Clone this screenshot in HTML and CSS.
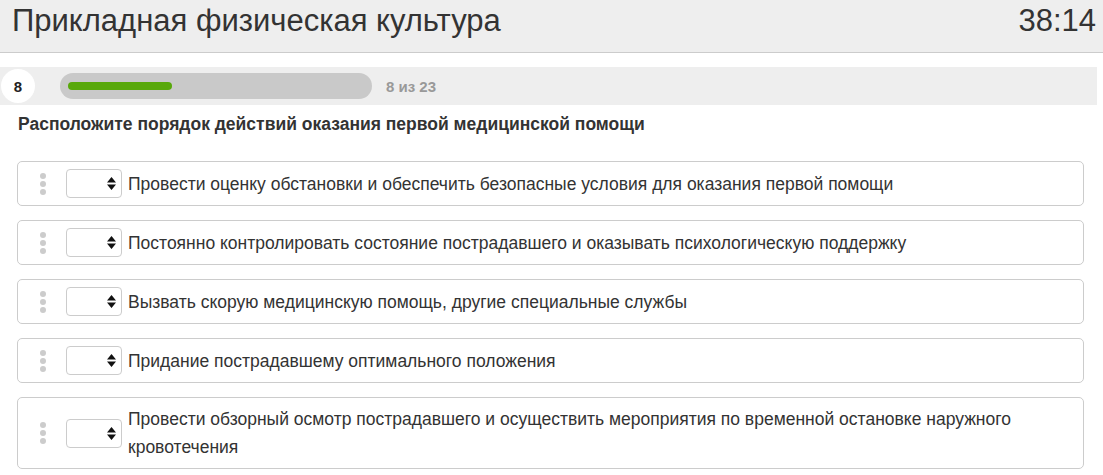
FILE: index.html
```html
<!DOCTYPE html>
<html lang="ru">
<head>
<meta charset="utf-8">
<title>Прикладная физическая культура</title>
<link rel="stylesheet" href="styles.css">
</head>
<body>
<header class="top">
  <h1 class="title">Прикладная физическая культура</h1>
  <div class="timer">38:14</div>
</header>
<div class="progress-row">
  <div class="num">8</div>
  <div class="track"><div class="fill"></div></div>
  <div class="count">8 из 23</div>
</div>
<p class="question">Расположите порядок действий оказания первой медицинской помощи</p>
<ul class="items">
  <li class="item">
    <span class="grip"><i></i><i></i><i></i></span>
    <span class="sel"><svg width="9" height="13" viewBox="0 0 9 13"><path d="M4.5 0 L9 5.5 H0 Z M4.5 13 L9 7.5 H0 Z" fill="#111"/></svg></span>
    <span class="text">Провести оценку обстановки и обеспечить безопасные условия для оказания первой помощи</span>
  </li>
  <li class="item">
    <span class="grip"><i></i><i></i><i></i></span>
    <span class="sel"><svg width="9" height="13" viewBox="0 0 9 13"><path d="M4.5 0 L9 5.5 H0 Z M4.5 13 L9 7.5 H0 Z" fill="#111"/></svg></span>
    <span class="text">Постоянно контролировать состояние пострадавшего и оказывать психологическую поддержку</span>
  </li>
  <li class="item">
    <span class="grip"><i></i><i></i><i></i></span>
    <span class="sel"><svg width="9" height="13" viewBox="0 0 9 13"><path d="M4.5 0 L9 5.5 H0 Z M4.5 13 L9 7.5 H0 Z" fill="#111"/></svg></span>
    <span class="text">Вызвать скорую медицинскую помощь, другие специальные службы</span>
  </li>
  <li class="item">
    <span class="grip"><i></i><i></i><i></i></span>
    <span class="sel"><svg width="9" height="13" viewBox="0 0 9 13"><path d="M4.5 0 L9 5.5 H0 Z M4.5 13 L9 7.5 H0 Z" fill="#111"/></svg></span>
    <span class="text">Придание пострадавшему оптимального положения</span>
  </li>
  <li class="item">
    <span class="grip"><i></i><i></i><i></i></span>
    <span class="sel"><svg width="9" height="13" viewBox="0 0 9 13"><path d="M4.5 0 L9 5.5 H0 Z M4.5 13 L9 7.5 H0 Z" fill="#111"/></svg></span>
    <span class="text">Провести обзорный осмотр пострадавшего и осуществить мероприятия по временной остановке наружного кровотечения</span>
  </li>
</ul>
</body>
</html>
```
FILE: styles.css
```css
html, body {
  margin: 0;
  padding: 0;
  background: #fff;
  font-family: "Liberation Sans", Arial, sans-serif;
  color: #333;
}
.top {
  display: flex;
  justify-content: space-between;
  align-items: flex-start;
  height: 53px;
  box-sizing: border-box;
  padding: 3px 7px 0 12px;
  background: #eee;
  border-bottom: 1px solid #ccc;
}
.title {
  margin: 0;
  font-size: 31px;
  font-weight: normal;
  line-height: 36px;
  color: #333;
}
.timer {
  font-size: 31px;
  line-height: 36px;
  color: #333;
}
.progress-row {
  display: flex;
  align-items: center;
  width: 1097px;
  height: 38px;
  margin-top: 14px;
  background: #eee;
}
.num {
  width: 34px;
  height: 34px;
  margin-left: 1px;
  border-radius: 50%;
  background: #fff;
  display: flex;
  align-items: center;
  justify-content: center;
  font-weight: bold;
  font-size: 15px;
  color: #222;
}
.track {
  display: flex;
  align-items: center;
  width: 312px;
  height: 26px;
  margin-left: 25px;
  border-radius: 13px;
  background: #c9c9c9;
}
.fill {
  width: 104px;
  height: 8px;
  margin-left: 8px;
  border-radius: 4px;
  background: #58a80a;
}
.count {
  margin-left: 14px;
  font-size: 15px;
  font-weight: bold;
  color: #999;
}
.question {
  margin: 8px 0 0 18px;
  font-size: 17.5px;
  font-weight: bold;
  line-height: 22px;
  color: #333;
}
.items {
  list-style: none;
  margin: 26px 19px 0 17px;
  padding: 0;
  display: flex;
  flex-direction: column;
  gap: 14px;
}
.item {
  display: flex;
  align-items: center;
  border: 1px solid #ccc;
  border-radius: 5px;
  padding: 7px 8px 7px 0;
}
.grip {
  display: flex;
  flex-direction: column;
  gap: 2px;
  margin-left: 22px;
  flex: none;
}
.grip i {
  display: block;
  width: 6px;
  height: 6px;
  border-radius: 50%;
  background: #ccc;
}
.sel {
  flex: none;
  display: flex;
  align-items: center;
  justify-content: flex-end;
  box-sizing: border-box;
  width: 56px;
  height: 29px;
  margin-left: 20px;
  padding-right: 5px;
  border: 1px solid #ccc;
  border-radius: 4px;
  background: #fff;
}
.sel svg {
  display: block;
}
.text {
  margin-left: 6px;
  font-size: 17.5px;
  line-height: 28px;
  color: #333;
}
```
